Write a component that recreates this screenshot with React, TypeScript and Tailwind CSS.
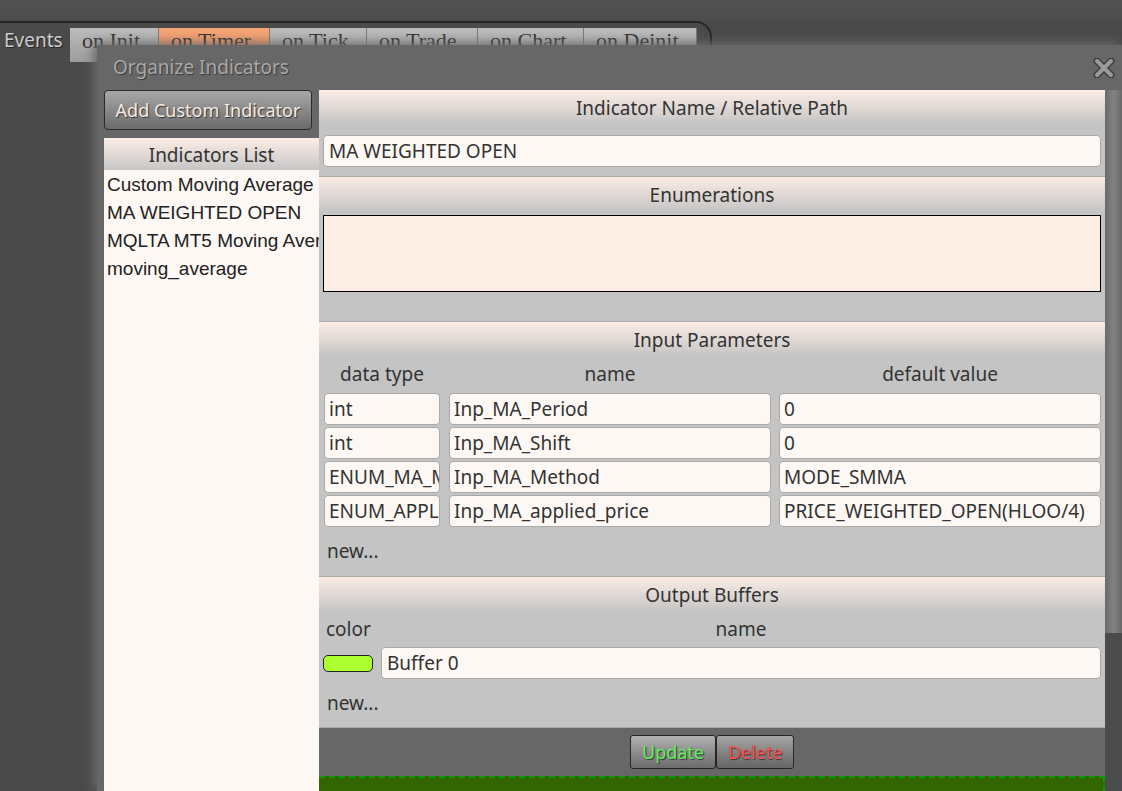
import React from 'react';

// tabs across the top, partly hidden by the dialog
const tabs = [
  { label: 'on Init', w: 'w-[89px]', active: false },
  { label: 'on Timer', w: 'w-[111px]', active: true },
  { label: 'on Tick', w: 'w-[97px]', active: false },
  { label: 'on Trade', w: 'w-[111px]', active: false },
  { label: 'on Chart', w: 'w-[106px]', active: false },
  { label: 'on Deinit', w: 'w-[113px]', active: false },
];

const indicators = ['Custom Moving Average', 'MA WEIGHTED OPEN', 'MQLTA MT5 Moving Average', 'moving_average'];

const params = [
  { type: 'int', name: 'Inp_MA_Period', value: '0' },
  { type: 'int', name: 'Inp_MA_Shift', value: '0' },
  { type: 'ENUM_MA_METHOD', name: 'Inp_MA_Method', value: 'MODE_SMMA' },
  { type: 'ENUM_APPLIED_PRICE', name: 'Inp_MA_applied_price', value: 'PRICE_WEIGHTED_OPEN(HLOO/4)' },
];

const Field = ({ value, className }: { value: string; className: string }) => (
  <div
    className={`h-[32px] rounded-[4px] border border-[#a9a9a9] bg-[#fdf8f4] pl-[4px] text-[19px] leading-[31px] text-[#333] overflow-hidden whitespace-nowrap ${className}`}
  >
    {value}
  </div>
);

const SectionHeader = ({ title }: { title: string }) => (
  <div className="h-[34px] bg-linear-to-b from-[#fcede5] to-[#c5c5c5] text-center text-[19px] leading-[36px] text-[#333]">
    {title}
  </div>
);

const CloseIcon = () => (
  <svg width="22" height="20" viewBox="0 0 22 20">
    <g strokeLinecap="round">
      <path d="M4 3 L18 17 M18 3 L4 17" stroke="#3e3e3e" strokeWidth="7" />
      <path d="M4 3 L18 17 M18 3 L4 17" stroke="#9a9a9a" strokeWidth="4" />
    </g>
  </svg>
);

export default function App() {
  return (
    <div className="relative h-[791px] w-[1122px] overflow-hidden bg-[#4a4a4a] font-['Noto_Sans',sans-serif]">
      {/* top tab strip */}
      <div className="h-[21px] bg-linear-to-b from-[#525252] to-[#4c4c4c]" />
      <div className="w-[712px] h-[60px] rounded-tr-[16px] border-t-2 border-r-2 border-[#262626] pt-[5px] flex items-start">
        <div className="w-[70px] pl-[4px] text-[19px] leading-[24px] text-[#cccccc] [text-shadow:1px_1px_1px_#222]">
          Events
        </div>
        {tabs.map((t) => (
          <div
            key={t.label}
            className={`${t.w} h-[34px] border-r border-[#7a7a7a] pl-[12px] font-['Liberation_Serif',serif] text-[22px] leading-[26px] text-[#333] ${
              t.active ? 'bg-linear-to-b from-[#f7a677] to-[#e48d5c]' : 'bg-linear-to-b from-[#bdbdbd] to-[#9c9c9c]'
            }`}
          >
            {t.label}
          </div>
        ))}
      </div>

      {/* dialog */}
      <div className="absolute left-[97px] top-[45px] right-0 bottom-0 bg-[#676767] shadow-[-4px_-2px_10px_#6a6a6a] flex flex-col">
        <div className="h-[45px] shrink-0 flex items-center justify-between pl-[16px] pr-[7px]">
          <span className="text-[19px] text-[#a8a8a8] [text-shadow:1px_1px_1px_#3a3a3a]">Organize Indicators</span>
          <CloseIcon />
        </div>

        <div className="flex flex-1 min-h-0 pl-[7px]">
          {/* left column */}
          <div className="w-[215px] shrink-0 flex flex-col">
            <button className="w-[208px] h-[40px] rounded-[4px] border border-[#2a2a2a] bg-linear-to-b from-[#a8a8a8] to-[#6c6c6c] text-[18px] text-[#f6ebe3] [text-shadow:1px_1px_1px_#333]">
              Add Custom Indicator
            </button>
            <div className="mt-[8px] flex-1 bg-[#fdf8f4]">
              <div className="h-[32px] bg-linear-to-b from-[#fcede5] to-[#c6c6c6] text-center text-[19px] leading-[34px] text-[#333]">
                Indicators List
              </div>
              <div className="pl-[3px] pt-[1px] font-['Liberation_Sans',sans-serif] text-[19px] leading-[28px] text-[#222] whitespace-nowrap overflow-hidden">
                {indicators.map((i) => (
                  <div key={i}>{i}</div>
                ))}
              </div>
            </div>
          </div>

          {/* right column */}
          <div className="w-[786px] shrink-0 flex flex-col">
            <div className="bg-[#c4c4c4] border-b border-[#a9a9a9] pb-[9px]">
              <SectionHeader title="Indicator Name / Relative Path" />
              <Field value="MA WEIGHTED OPEN" className="mt-[11px] mx-[4px] pl-[5px]" />
            </div>

            <div className="bg-[#c4c4c4] border-b border-[#a9a9a9] pb-[29px]">
              <SectionHeader title="Enumerations" />
              <div className="mt-[4px] mx-[4px] h-[77px] border border-black bg-[#fdeee6]" />
            </div>

            <div className="bg-[#c4c4c4] border-b border-[#a9a9a9] h-[255px]">
              <SectionHeader title="Input Parameters" />
              <div className="flex h-[37px] items-center text-[19px] text-[#333] text-center">
                <div className="ml-[5px] w-[116px]">data type</div>
                <div className="ml-[9px] w-[322px]">name</div>
                <div className="ml-[8px] w-[322px]">default value</div>
              </div>
              <div className="flex flex-col gap-[2px]">
                {params.map((p) => (
                  <div key={p.name} className="flex">
                    <Field value={p.type} className="ml-[5px] w-[116px]" />
                    <Field value={p.name} className="ml-[9px] w-[322px]" />
                    <Field value={p.value} className="ml-[8px] w-[322px]" />
                  </div>
                ))}
              </div>
              <div className="pl-[8px] mt-[10px] text-[19px] leading-[28px] text-[#333]">new...</div>
            </div>

            <div className="bg-[#c4c4c4] border-b border-[#a9a9a9] h-[151px]">
              <SectionHeader title="Output Buffers" />
              <div className="flex h-[36px] items-center text-[19px] text-[#333]">
                <div className="w-[62px] pl-[7px]">color</div>
                <div className="w-[720px] text-center">name</div>
              </div>
              <div className="flex items-center">
                <div className="ml-[4px] w-[50px] h-[17px] rounded-[5px] border border-[#222] bg-[#adff2f]" />
                <Field value="Buffer 0" className="ml-[8px] w-[720px] pl-[5px]" />
              </div>
              <div className="pl-[8px] mt-[10px] text-[19px] leading-[28px] text-[#333]">new...</div>
            </div>

            <div className="h-[48px] shrink-0 flex items-center justify-center">
              <button className="w-[86px] h-[34px] rounded-[3px] border border-[#262626] bg-linear-to-b from-[#b2b2b2] to-[#6c6c6c] text-[18px] text-[#5cf05c] [text-shadow:1px_1px_1px_#333]">
                Update
              </button>
              <button className="w-[78px] h-[34px] rounded-[3px] border border-[#262626] bg-linear-to-b from-[#a6a6a6] to-[#656565] text-[18px] text-[#ff5252] [text-shadow:1px_1px_1px_#333]">
                Delete
              </button>
            </div>

            <div className="flex-1 bg-[#336600] border-t-2 border-r-2 border-dashed border-[#0a9a0a]" />
          </div>

          {/* scrollbar */}
          <div className="w-[17px] shrink-0 flex flex-col bg-[#4b4b4b]">
            <div className="h-[543px] bg-linear-to-r from-[#6a6a6a] via-[#838383] to-[#6a6a6a]" />
          </div>
        </div>
      </div>
    </div>
  );
}
